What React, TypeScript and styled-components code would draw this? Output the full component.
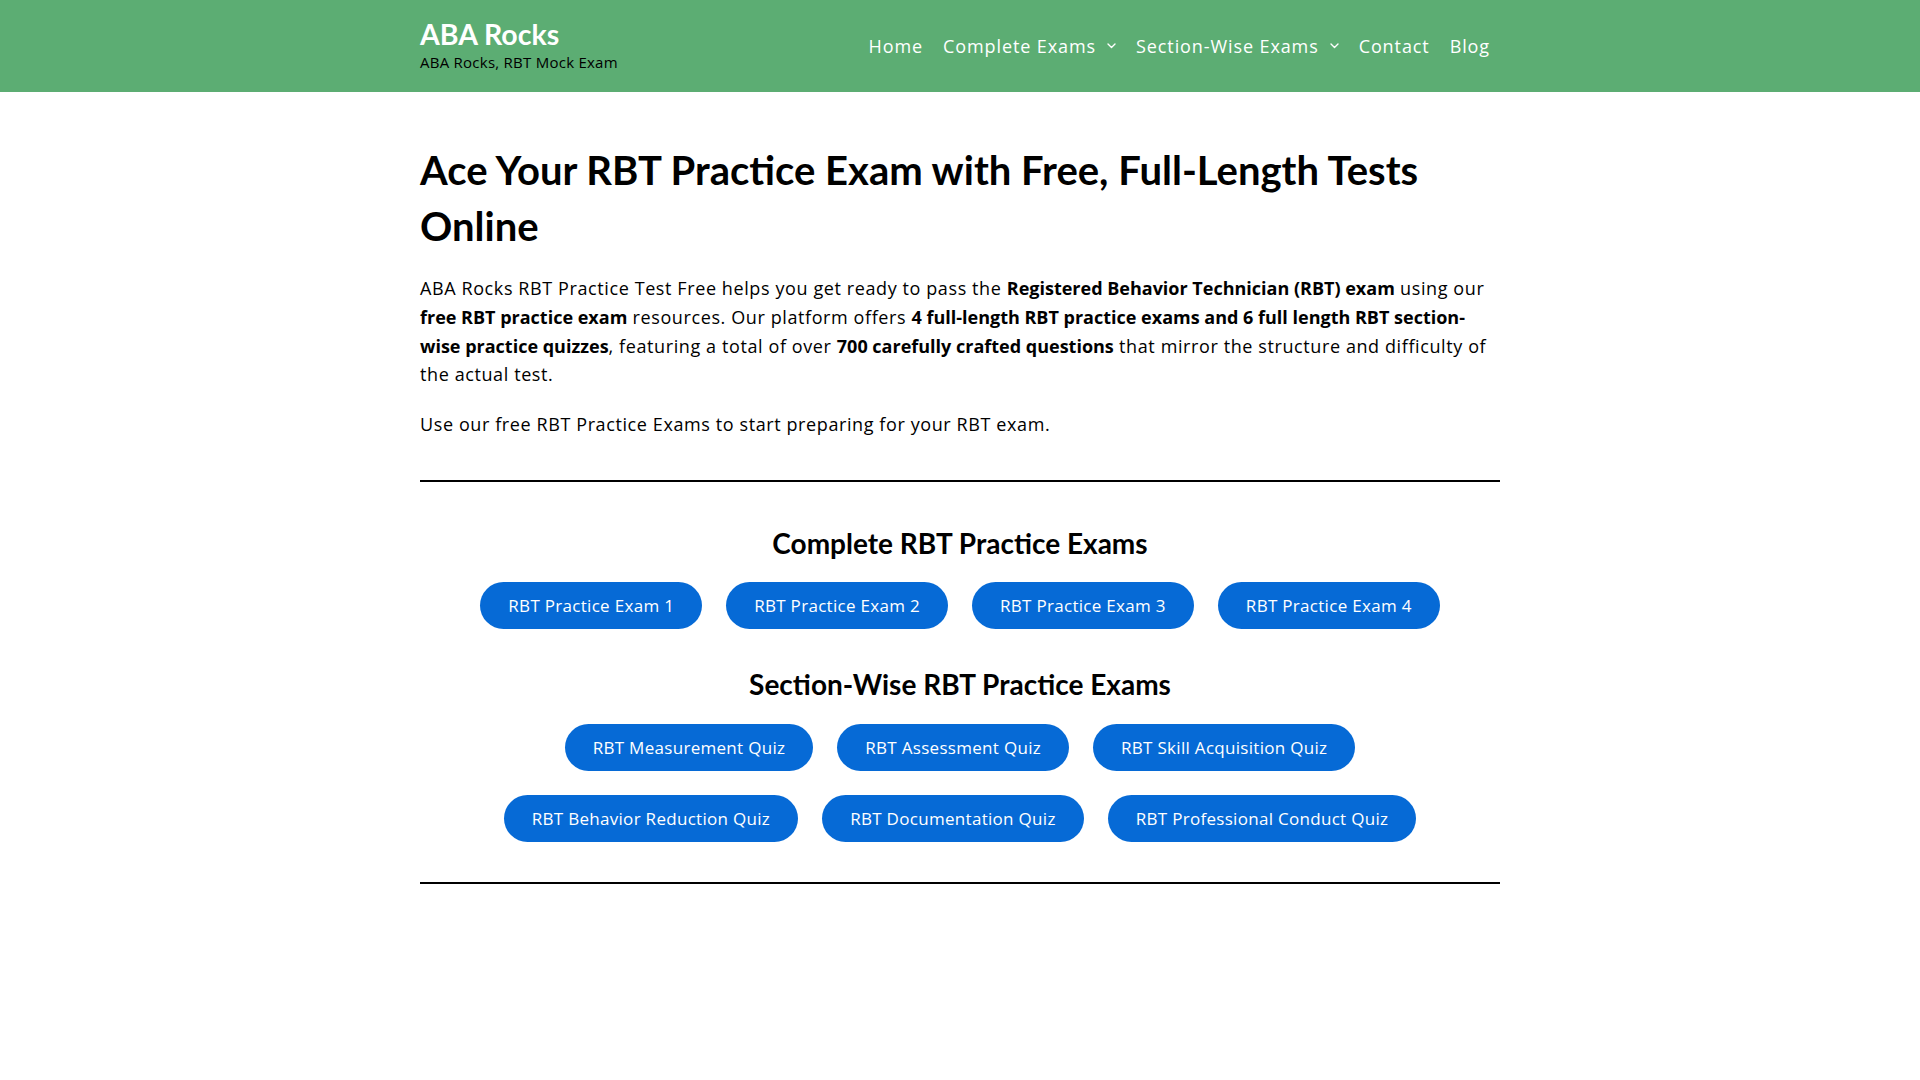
import React from 'react';
import styled, { createGlobalStyle } from 'styled-components';

const GlobalStyle = createGlobalStyle`
  html, body {
    margin: 0;
    padding: 0;
    background: #ffffff;
  }
  body {
    font-family: 'Open Sans', 'Liberation Sans', sans-serif;
    color: #000000;
  }
  * {
    box-sizing: border-box;
  }
`;

const HeaderBar = styled.header`
  background: #5cad73;
  height: 92px;
`;

const HeaderInner = styled.div`
  width: 1080px;
  height: 100%;
  margin: 0 auto;
  display: flex;
  align-items: center;
  justify-content: space-between;
`;

const Brand = styled.div`
  display: flex;
  flex-direction: column;
  margin-top: -1px;
`;

const SiteTitle = styled.a`
  font-family: Lato, 'Liberation Sans', sans-serif;
  font-weight: 700;
  font-size: 28.5px;
  line-height: 28px;
  color: #ffffff;
  text-decoration: none;
`;

const Tagline = styled.span`
  margin-top: 4px;
  font-family: 'Open Sans', 'Liberation Sans', sans-serif;
  font-size: 15px;
  line-height: 20px;
  letter-spacing: 0.25px;
  color: #000000;
`;

const Nav = styled.nav`
  display: flex;
  align-items: center;
  gap: 20px;
  padding-right: 10px;
`;

const NavLink = styled.a`
  display: flex;
  align-items: center;
  gap: 11px;
  font-family: 'Open Sans', 'Liberation Sans', sans-serif;
  font-size: 18px;
  letter-spacing: 0.9px;
  color: #ffffff;
  text-decoration: none;
  white-space: nowrap;
`;

const Chevron = () => (
  <svg width="9" height="6" viewBox="0 0 9 6" fill="none">
    <path d="M1 1l3.5 3.5L8 1" stroke="#ffffff" strokeWidth="1.4" strokeLinecap="round" strokeLinejoin="round" />
  </svg>
);

const Main = styled.main`
  width: 1080px;
  margin: 0 auto;
  padding-top: 50px;
`;

const Title = styled.h1`
  font-family: Lato, 'Liberation Sans', sans-serif;
  font-weight: 700;
  font-size: 40px;
  line-height: 56px;
  margin: 0 0 20px;
  color: #000000;
`;

const Para = styled.p`
  font-size: 18px;
  line-height: 28.8px;
  letter-spacing: 0.6px;
  margin: 0 0 21px;
  color: #000000;

  strong {
    font-weight: 700;
    letter-spacing: 0;
  }
`;

const Rule = styled.hr<{ $top?: boolean }>`
  border: none;
  height: 2px;
  background: #000000;
  margin: ${({ $top }) => ($top ? '41px 0 0' : '0')};
`;

const ExamSection = styled.section`
  display: flex;
  flex-direction: column;
  align-items: center;
  padding: 44px 0 40px;
`;

const SectionTitle = styled.h2<{ $first?: boolean }>`
  font-family: Lato, 'Liberation Sans', sans-serif;
  font-weight: 700;
  font-size: 28px;
  line-height: 34px;
  margin: ${({ $first }) => ($first ? '0 0 22px' : '38px 0 23px')};
  color: #000000;
  text-align: center;
`;

const ButtonGroup = styled.div`
  display: flex;
  flex-wrap: wrap;
  justify-content: center;
  gap: 24px;
  width: 100%;
`;

const ExamButton = styled.a`
  display: inline-flex;
  align-items: center;
  justify-content: center;
  height: 47px;
  padding: 0 28px;
  border-radius: 24px;
  background: #066ad6;
  color: #ffffff;
  font-family: 'Open Sans', 'Liberation Sans', sans-serif;
  font-size: 17px;
  letter-spacing: 0.3px;
  text-decoration: none;
  white-space: nowrap;
`;

const completeExams = [
  'RBT Practice Exam 1',
  'RBT Practice Exam 2',
  'RBT Practice Exam 3',
  'RBT Practice Exam 4',
];

const sectionExams = [
  'RBT Measurement Quiz',
  'RBT Assessment Quiz',
  'RBT Skill Acquisition Quiz',
  'RBT Behavior Reduction Quiz',
  'RBT Documentation Quiz',
  'RBT Professional Conduct Quiz',
];

const App: React.FC = () => {
  return (
    <>
      <GlobalStyle />
      <HeaderBar>
        <HeaderInner>
          <Brand>
            <SiteTitle href="#">ABA Rocks</SiteTitle>
            <Tagline>ABA Rocks, RBT Mock Exam</Tagline>
          </Brand>
          <Nav>
            <NavLink href="#">Home</NavLink>
            <NavLink href="#">
              Complete Exams <Chevron />
            </NavLink>
            <NavLink href="#">
              Section-Wise Exams <Chevron />
            </NavLink>
            <NavLink href="#">Contact</NavLink>
            <NavLink href="#">Blog</NavLink>
          </Nav>
        </HeaderInner>
      </HeaderBar>
      <Main>
        <Title>Ace Your RBT Practice Exam with Free, Full-Length Tests Online</Title>
        <Para>
          ABA Rocks RBT Practice Test Free helps you get ready to pass the{' '}
          <strong>Registered Behavior Technician (RBT) exam</strong> using our{' '}
          <strong>free RBT practice exam</strong> resources. Our platform offers{' '}
          <strong>4 full-length RBT practice exams and 6 full length RBT section-wise practice quizzes</strong>,
          featuring a total of over <strong>700 carefully crafted questions</strong> that mirror the
          structure and difficulty of the actual test.
        </Para>
        <Para>Use our free RBT Practice Exams to start preparing for your RBT exam.</Para>
        <Rule $top />
        <ExamSection>
          <SectionTitle $first>Complete RBT Practice Exams</SectionTitle>
          <ButtonGroup>
            {completeExams.map(name => (
              <ExamButton key={name} href="#">
                {name}
              </ExamButton>
            ))}
          </ButtonGroup>
          <SectionTitle>Section-Wise RBT Practice Exams</SectionTitle>
          <ButtonGroup>
            {sectionExams.map(name => (
              <ExamButton key={name} href="#">
                {name}
              </ExamButton>
            ))}
          </ButtonGroup>
        </ExamSection>
        <Rule />
      </Main>
    </>
  );
};

export default App;
